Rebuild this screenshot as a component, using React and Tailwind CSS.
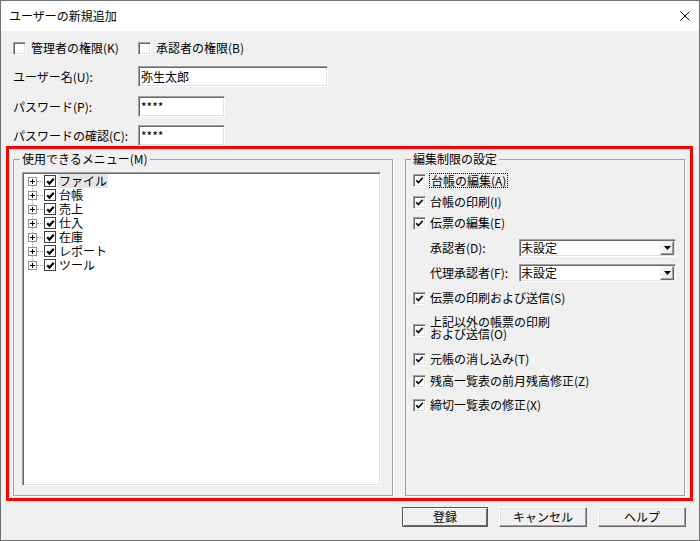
import React from "react";

const menus = ["ファイル", "台帳", "売上", "仕入", "在庫", "レポート", "ツール"];

const sunken =
  "border border-t-[#a0a0a0] border-l-[#a0a0a0] border-b-white border-r-white shadow-[inset_1px_1px_0_#696969,inset_-1px_-1px_0_#e3e3e3]";

function CheckMark({ bold }) {
  return (
    <svg width="9" height="9" viewBox="0 0 9 9">
      <polyline
        points="1.2,4.2 3.4,6.6 7.8,1.8"
        fill="none"
        stroke="#000"
        strokeWidth={bold ? 2.2 : 1.6}
      />
    </svg>
  );
}

function Box({ checked }) {
  return (
    <span className={`flex h-[13px] w-[13px] shrink-0 items-center justify-center bg-white ${sunken}`}>
      {checked && <CheckMark />}
    </span>
  );
}

function Option({ label, className = "", focus }) {
  return (
    <div className={`flex items-center ${className}`}>
      <Box checked />
      {focus ? (
        <span className="ml-[3px] block border border-dotted border-black px-[1px] leading-[13px]">{label}</span>
      ) : (
        <span className="ml-[4px] block leading-[14px]">{label}</span>
      )}
    </div>
  );
}

function Combo({ label, className = "" }) {
  return (
    <div className={`flex h-[18px] items-center ${className}`}>
      <span className="ml-[17px] w-[89px]">{label}</span>
      <div className={`flex h-[18px] w-[157px] items-center bg-white ${sunken}`}>
        <span className="flex-1 pl-[1px]">未設定</span>
        <span className="mr-[1px] flex h-[14px] w-[14px] items-center justify-center border border-t-[#f0f0f0] border-l-[#f0f0f0] border-b-[#696969] border-r-[#696969] bg-[#f0f0f0] shadow-[inset_-1px_-1px_0_#a0a0a0,inset_1px_1px_0_#fff]">
          <svg width="7" height="4" viewBox="0 0 7 4">
            <polygon points="0,0 7,0 3.5,4" fill="#000" />
          </svg>
        </span>
      </div>
    </div>
  );
}

function Button({ children, primary }) {
  return (
    <button
      className={
        primary
          ? "flex h-[20px] w-[86px] items-center justify-center border border-[#5a5a5a] bg-[#f0f0f0] shadow-[inset_1px_1px_0_#fff,inset_-1px_-1px_0_#696969]"
          : "flex h-[20px] w-[88px] items-center justify-center border border-t-white border-l-white border-b-[#696969] border-r-[#696969] bg-[#f0f0f0] shadow-[inset_-1px_-1px_0_#a0a0a0,inset_1px_1px_0_#e3e3e3]"
      }
    >
      {children}
    </button>
  );
}

export default function App() {
  return (
    <div className="flex h-[541px] w-[700px] flex-col border border-[#707070] bg-[#f0f0f0] font-['Noto_Sans_CJK_JP',sans-serif] text-[12px] leading-[14px] text-black">
      <div className="flex h-[30px] shrink-0 items-center justify-between bg-white pl-[8px] pr-[9px]">
        <span>ユーザーの新規追加</span>
        <svg width="10" height="10" viewBox="0 0 10 10">
          <path d="M0.5 0.5 L9.5 9.5 M9.5 0.5 L0.5 9.5" stroke="#000" strokeWidth="1" />
        </svg>
      </div>

      <div className="relative flex-1 pl-[12px] pr-[13px] pt-[10px]">
        <div className="flex h-[14px] items-center">
          <div className="flex w-[125px] items-center">
            <Box />
            <span className="ml-[5px]">管理者の権限(K)</span>
          </div>
          <div className="flex items-center">
            <Box />
            <span className="ml-[5px]">承認者の権限(B)</span>
          </div>
        </div>

        <div className="mt-[11px] flex items-center">
          <span className="w-[125px]">ユーザー名(U):</span>
          <div className={`flex h-[21px] w-[190px] items-center bg-white pl-[2px] ${sunken}`}>弥生太郎</div>
        </div>
        <div className="mt-[9px] flex items-center">
          <span className="w-[125px]">パスワード(P):</span>
          <div className={`flex h-[21px] w-[87px] items-center bg-white pl-[2px] ${sunken}`}>****</div>
        </div>
        <div className="mt-[8px] flex items-center">
          <span className="w-[125px]">パスワードの確認(C):</span>
          <div className={`flex h-[21px] w-[87px] items-center bg-white pl-[2px] ${sunken}`}>****</div>
        </div>

        <div className="mt-[6px] flex h-[344px] gap-[12px]">
          <fieldset className="h-full w-[380px] border border-[#a0a0a0] shadow-[1px_1px_0_#fff]">
            <legend className="ml-[6px] px-[2px] leading-[14px]">使用できるメニュー(M)</legend>
            <div className={`ml-[8px] mt-[6px] h-[314px] w-[359px] bg-white pl-[5px] pt-[1px] ${sunken}`}>
              <div className="relative">
                <span className="absolute bottom-[7px] left-[4px] top-[7px] border-l border-dotted border-[#a0a0a0]" />
                {menus.map((m, i) => (
                  <div key={i} className="relative flex h-[14px] items-center">
                    <span className="flex h-[9px] w-[9px] items-center justify-center border border-[#919191] bg-white">
                      <svg width="5" height="5" viewBox="0 0 5 5">
                        <path d="M0 2.5 H5 M2.5 0 V5" stroke="#000" strokeWidth="1" />
                      </svg>
                    </span>
                    <span className="w-[6px] border-t border-dotted border-[#a0a0a0]" />
                    <span className="ml-[1px] flex h-[12px] w-[12px] items-center justify-center border border-[#404040] bg-white">
                      <CheckMark bold />
                    </span>
                    <span className={`ml-[2px] block h-[14px] px-[1px] leading-[14px] ${i === 0 ? "bg-[#e5e5e5]" : ""}`}>{m}</span>
                  </div>
                ))}
              </div>
            </div>
          </fieldset>

          <fieldset className="h-full w-[280px] border border-[#a0a0a0] shadow-[1px_1px_0_#fff]">
            <legend className="ml-[5px] px-[2px] leading-[14px]">編集制限の設定</legend>
            <div className="flex flex-col pl-[7px]">
              <Option className="mt-[7px] h-[14px]" label="台帳の編集(A)" focus />
              <Option className="mt-[8px] h-[14px]" label="台帳の印刷(I)" />
              <Option className="mt-[7px] h-[14px]" label="伝票の編集(E)" />
              <Combo className="mt-[9px]" label="承認者(D):" />
              <Combo className="mt-[7px]" label="代理承認者(F):" />
              <Option className="mt-[9px] h-[14px]" label="伝票の印刷および送信(S)" />
              <div className="mt-[11px] flex items-start">
                <span className="mt-[8px]">
                  <Box checked />
                </span>
                <span className="ml-[4px] flex flex-col leading-[12px]">
                  <span className="block">上記以外の帳票の印刷</span>
                  <span className="block">および送信(O)</span>
                </span>
              </div>
              <Option className="mt-[12px] h-[14px]" label="元帳の消し込み(T)" />
              <Option className="mt-[8px] h-[14px]" label="残高一覧表の前月残高修正(Z)" />
              <Option className="mt-[10px] h-[14px]" label="締切一覧表の修正(X)" />
            </div>
          </fieldset>
        </div>

        <div className="mt-[11px] flex justify-end gap-[11px]">
          <Button primary>登録</Button>
          <Button>キャンセル</Button>
          <Button>ヘルプ</Button>
        </div>

        <div className="pointer-events-none absolute left-[5px] top-[115px] h-[355px] w-[687px] border-[3px] border-[#ff0000]" />
      </div>
    </div>
  );
}
